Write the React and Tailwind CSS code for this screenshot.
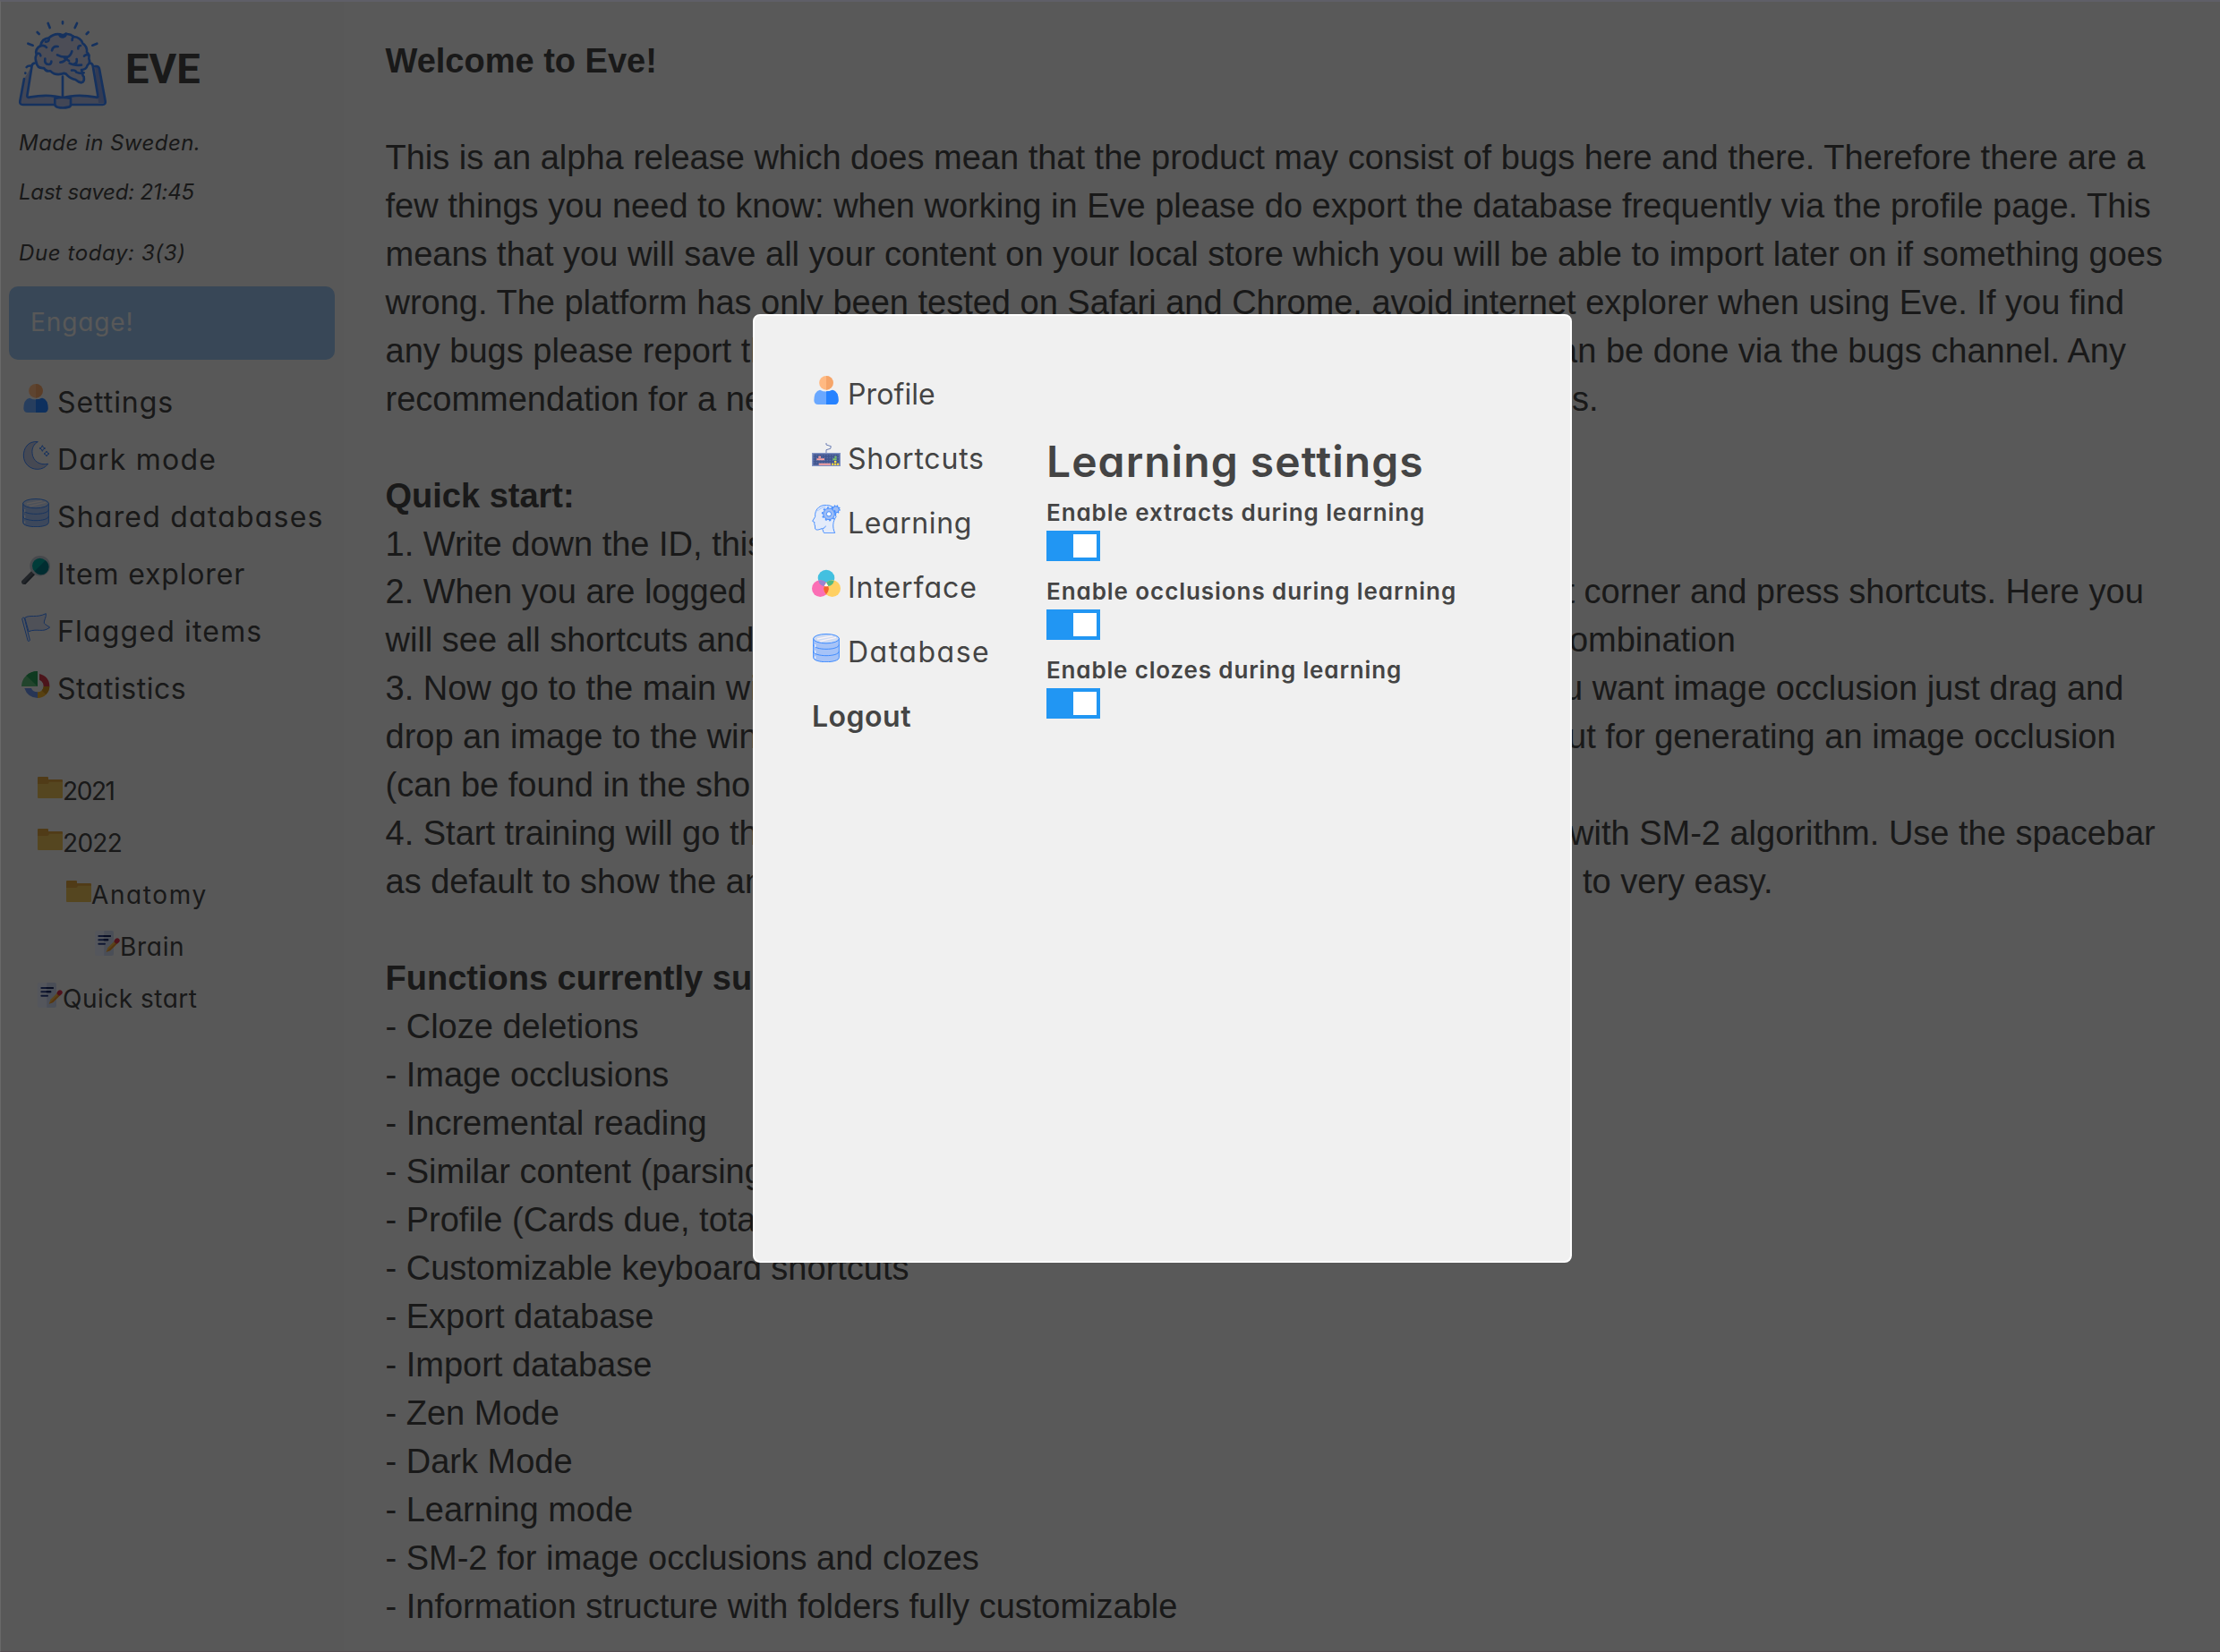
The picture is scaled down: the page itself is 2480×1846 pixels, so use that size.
import React from "react";

const inter = "font-['Inter',sans-serif] [font-feature-settings:'cv11']";

function Logo() {
  return (
    <svg viewBox="60 35 300 300" className="size-[100px] shrink-0" fill="none" stroke="#3a86ff" strokeWidth="8" strokeLinecap="round" strokeLinejoin="round">
      <path fill="#b4bfe6" stroke="none" d="M81 233 68 310q-1 10 8 10h268q10 0 8-11l-24-116-18-5 18 108q-70-8-118 4-50-12-120-4l18-108z" />
      <path fill="#f0f0f4" stroke="none" d="M112 180 92 296q70-8 118 4 50-12 118-4L304 180z" />
      <path fill="#8b9fe0" stroke="none" d="M318 192l16 2 20 120h-24z" />
      <path d="M81 233 67 308q-2 12 10 12h266q12 0 10-12l-20-108q-2-9-10-9h-5M104 190q-10-2-15 4" />
      <path d="M85 214v.5" />
      <path d="M116 181q-7 0-9 8L91 290q0 7 8 5 66-12 111 3 45-15 112-3 8 2 6-5L311 189q-2-8-9-8" />
      <path d="M210 226v70" />
      <path fill="#b4bfe6" d="M184 299v19q0 8 8 10 18 5 38 0 8-2 7-10v-19q-26-7-53 0Z" />
      <path fill="#cdd0ea" d="M167 207q-12 3-20-10-22 2-25-18-6-16 0-26-6-20 14-31 4-24 28-26 22-20 46-9 20-10 37 5 23 2 30 22 16 10 14 30 10 9 7 22 6 13-5 22-4 15-20 15l4 14q-1 6 4 9 3 17-8 20-10-1-20-10-18-4-26-13-8-12-20-6-24 5-38-10Z" />
      <path d="M164 98q1 12-11 11M199 84q1 9 12 9 10-2 10-11M247 92q-6 4-5 12M136 123q13-5 20 5M124 149q10-4 12 7M174 138q4-16 20-13M241 141q-4 15-15 19 M192 153q14 8 34 7-8 17-24 18M216 163l15 10M151 166q-3 18 12 19 9-1 9-10M257 167q3 14-9 17M233 181q14 8 40 6M298 154q-9-5-16 3M270 122q-9 0-8 10M240 205q13-2 16 6 12 6 25 2" />
      <path d="M210 42v6M161 47l6 15M258 47l-7 15M125 77l6 6M296 77l-6 6M94 115l16 6M325 115l-15 6" />
    </svg>
  );
}

const box = "size-8 shrink-0";

function Person() {
  return (
    <svg viewBox="0 0 96 96" className={box}>
      <circle cx="48" cy="23.500" r="23.500" fill="#ffb982" />
      <path d="M48 0a23.500 23.500 0 0 1 0 47z" fill="#f5a56a" />
      <path d="M27 47Q7 52 7 82q0 14 14 14h54q14 0 14-14 0-30-20-35-21 11-42 0Z" fill="#6aa8ff" />
      <path d="M48 52q11 0 21-5 20 5 20 35 0 14-14 14H48Z" fill="#2682ff" />
    </svg>
  );
}

function Moon() {
  return (
    <svg viewBox="0 0 96 96" className={box} stroke="#3f87ff" strokeWidth="3" strokeLinejoin="round">
      <path d="M55 2C20-2 7 26 7 48c0 28 22 46 46 46 15 0 29-7 36-18C60 82 38 66 36 40 34 22 43 8 55 2Z" fill="#bec6e0" />
      <path d="m70 14 3 7 7 3-7 3-3 7-3-7-7-3 7-3ZM84 33l3 6 6 3-6 3-3 6-3-6-6-3 6-3Z" fill="none" />
    </svg>
  );
}

function Database() {
  return (
    <svg viewBox="0 0 96 96" className={box} stroke="#3f8cff" strokeWidth="3">
      <path d="M5 16v64c0 20 86 20 86 0V16Z" fill="#a6c3f7" />
      <path d="M5 37c0 20 86 20 86 0M5 59c0 20 86 20 86 0" fill="none" />
      <path d="M11 36v10M11 56v10M11 76v8" stroke="#e8f0ff" strokeWidth="4" />
      <ellipse cx="48" cy="17" rx="43" ry="15.500" fill="#cfdcf3" />
      <path d="m18 18 52-10M26 26l55-13" stroke="#fbf3f5" strokeWidth="4" />
    </svg>
  );
}

function Magnifier() {
  return (
    <svg viewBox="0 0 96 96" className={box}>
      <path d="M8 88 40 56" stroke="#5c6670" strokeWidth="16" strokeLinecap="round" />
      <path d="M12 93 43 61" stroke="#434d57" strokeWidth="6" strokeLinecap="round" />
      <circle cx="62" cy="34" r="30" fill="#00a29b" stroke="#bcc3cd" strokeWidth="8" />
      <path d="M80 16a26 26 0 1 1-36 36Z" fill="#007a86" />
    </svg>
  );
}

function Flag() {
  return (
    <svg viewBox="0 0 96 96" className={box} stroke="#3f87ff" strokeWidth="3" strokeLinejoin="round">
      <path d="M11 16C30 4 48 18 82 2c2 12-8 24-6 32 4 6 14 10 19 14-24 20-40 2-71 14Z" fill="#d5dcee" />
      <path d="M2 20c0-5 7-6 8-2l18 72c0 5-6 6-7 2Z" fill="#e0e6f5" />
    </svg>
  );
}

function Pie() {
  return (
    <svg viewBox="0 0 96 96" className={box}>
      <path d="M54 54H0A54 51 0 0 1 54 3Z" fill="#5cb877" />
      <path d="M54 54 16 18Q32 3 54 3Z" fill="#2a9d58" />
      <path d="M60 12a41 41 0 0 1 34 42H74q0-16-14-22Z" fill="#cf3a4a" />
      <path d="M94 54a40 40 0 0 1-40 39V73q17 0 20-19Z" fill="#eeb02c" />
      <path d="M94 54a40 40 0 0 1-12 27L68 68q6-6 6-14Z" fill="#cc9022" />
      <path d="M10 60h23q5 13 21 13v20Q20 91 10 60Z" fill="#6a90e6" />
    </svg>
  );
}

function Keyboard() {
  return (
    <svg viewBox="0 0 96 96" className={box}>
      <path d="M48 9v6l16 5-2 8-14 4v11" fill="none" stroke="#6d7fb5" strokeWidth="3" />
      <rect y="42" width="96" height="45" fill="#8294c4" />
      <rect x="4" y="46" width="88" height="37" fill="#41568f" />
      <path d="M5 51h86M5 59h86M5 67h86M5 75h86" stroke="#6f83b8" strokeWidth="3" strokeDasharray="3 6" />
      <path d="M16 64h26M22 56h8M23 80h40" stroke="#fba3a3" strokeWidth="6" />
      <path d="M70 64h13M76 56h7" stroke="#7cc36a" strokeWidth="6" />
      <path d="M66 80h25M75 72h8" stroke="#ffdf3c" strokeWidth="6" strokeDasharray="7 2" />
    </svg>
  );
}

function Head() {
  return (
    <svg viewBox="0 0 96 96" className={box} stroke="#4a90ff" strokeWidth="3" strokeLinejoin="round">
      <path d="M60 3C30-5 8 14 11 40L2 55l7 4-1 6 2 4 1 12c4 6 14 2 22-1 6 4 3 10 8 15h36c-10-22-6-40 4-55L72 8Z" fill="#e3ebfa" />
      <path d="M34 80c8-1 10-4 12-9" fill="none" />
      <path d="M18 22c6-8 18-14 28-15" fill="none" stroke="#9fc3ff" />
      <circle cx="80" cy="16" r="11" fill="#9dbdf5" strokeWidth="3" />
      <circle cx="80" cy="16" r="13" fill="none" strokeWidth="5" strokeDasharray="4 5" />
      <circle cx="57" cy="31" r="19" fill="#9dbdf5" />
      <circle cx="57" cy="31" r="22" fill="none" strokeWidth="5" strokeDasharray="6 7.800" />
      <circle cx="57" cy="31" r="8" fill="#f4f8ff" />
    </svg>
  );
}

function Rings() {
  return (
    <svg viewBox="0 0 96 96" className={box}>
      <circle cx="48" cy="30" r="28" fill="#43c0e0" />
      <circle cx="28" cy="65" r="28" fill="#fb6eb4" />
      <circle cx="68" cy="65" r="28" fill="#ffd062" />
      <path d="M22 40q12-6 23 3l3 7-6 7Q26 56 22 40Z" fill="#9a84d0" />
      <path d="M74 40q-12-6-23 3l-3 7 6 7Q70 56 74 40Z" fill="#4fb985" />
      <path d="M48 45q17 20 0 40-17-20 0-40Z" fill="#f4652c" />
      <path d="m48 45 7 11q-7 3-14 0Z" fill="#fff" />
    </svg>
  );
}

function Folder() {
  return (
    <svg viewBox="0 0 84 84" className="size-7 shrink-0">
      <path d="M0 9q0-3 3-3h30q3 0 3 3v6h45q3 0 3 3v50H0Z" fill="#d9a040" />
      <path d="M0 30h34l6-7h44v52q0 3-3 3H3q-3 0-3-3Z" fill="#e6bd58" />
    </svg>
  );
}

function Note() {
  return (
    <svg viewBox="0 0 84 84" className="size-7 shrink-0" strokeLinecap="round">
      <rect width="63" height="84" rx="7" fill="#e3e9f8" />
      <path d="M31 0h25q7 0 7 7v70q0 7-7 7H31Z" fill="#c9d3ec" />
      <path d="M13 18h38M13 31h30M13 44h20" stroke="#2b3f86" strokeWidth="6" />
      <path d="M31 18h20M31 31h12" stroke="#16245e" strokeWidth="6" />
      <path d="M38 71 43 57 68 32 77 41 52 66Z" fill="#f5b94a" />
      <path d="M38 71 52 66 77 41 73 37Z" fill="#e8912c" />
      <path d="m73 35 2-2" stroke="#d8304a" strokeWidth="16" />
    </svg>
  );
}

const menu = [
  [Person, "Settings", "tracking-[0.95px]"],
  [Moon, "Dark mode", "tracking-[1.2px]"],
  [Database, "Shared databases", "tracking-[1.2px]"],
  [Magnifier, "Item explorer", "tracking-[0.85px]"],
  [Flag, "Flagged items", "tracking-[1.17px]"],
  [Pie, "Statistics", "tracking-[0.55px]"],
];

const tree = [
  [Folder, "2021", "pl-[42px] tracking-[-1.4px]"],
  [Folder, "2022", "pl-[42px] tracking-[-0.7px]"],
  [Folder, "Anatomy", "pl-[74px] tracking-[1.6px]"],
  [Note, "Brain", "pl-[106px] tracking-[0.7px]"],
  [Note, "Quick start", "pl-[42px] tracking-[0.5px]"],
];

const nav = [
  [Person, "Profile", "tracking-[0.1px]"],
  [Keyboard, "Shortcuts", "tracking-[0.8px]"],
  [Head, "Learning", "tracking-[0.6px]"],
  [Rings, "Interface", "tracking-[0.95px]"],
  [Database, "Database", "tracking-[1.5px]"],
];

const toggles = [
  ["Enable extracts during learning", "tracking-[0.91px]"],
  ["Enable occlusions during learning", "tracking-[0.93px]"],
  ["Enable clozes during learning", "tracking-[0.84px]"],
];

const lines = [
  { b: "Welcome to Eve!" },
  {},
  { t: "This is an alpha release which does mean that the product may consist of bugs here and there. Therefore there are a" },
  { t: "few things you need to know: when working in Eve please do export the database frequently via the profile page. This" },
  { t: "means that you will save all your content on your local store which you will be able to import later on if something goes" },
  { t: "wrong. The platform has only been tested on Safari and Chrome, avoid internet explorer when using Eve. If you find" },
  { t: "any bugs please report th", w: "w-[1310.6px]", r: "an be done via the bugs channel. Any" },
  { t: "recommendation for a ne", w: "w-[1325.5px]", r: "s." },
  {},
  { b: "Quick start:" },
  { t: "1. Write down the ID, this" },
  { t: "2. When you are logged", w: "w-[1318px]", r: "t corner and press shortcuts. Here you" },
  { t: "will see all shortcuts and", w: "w-[1322.4px]", r: "ombination" },
  { t: "3. Now go to the main wi", w: "w-[1316.6px]", r: "u want image occlusion just drag and" },
  { t: "drop an image to the win", w: "w-[1320.5px]", r: "ut for generating an image occlusion" },
  { t: "(can be found in the sho" },
  { t: "4. Start training will go th", w: "w-[1322.5px]", r: "with SM-2 algorithm. Use the spacebar" },
  { t: "as default to show the an", w: "w-[1337.5px]", r: "to very easy." },
  {},
  { b: "Functions currently su" },
  { t: "- Cloze deletions" },
  { t: "- Image occlusions" },
  { t: "- Incremental reading" },
  { t: "- Similar content (parsing" },
  { t: "- Profile (Cards due, tota" },
  { t: "- Customizable keyboard shortcuts" },
  { t: "- Export database" },
  { t: "- Import database" },
  { t: "- Zen Mode" },
  { t: "- Dark Mode" },
  { t: "- Learning mode" },
  { t: "- SM-2 for image occlusions and clozes" },
  { t: "- Information structure with folders fully customizable" },
];

export default function App() {
  return (
    <div className="relative h-[1846px] w-[2480px] overflow-hidden bg-[#f0f0f0] text-[#444]">
      <div className="flex h-full">
        <aside className={`flex w-[384px] shrink-0 flex-col bg-[#eeeeee] ${inter}`}>
          <div className="flex h-[122px] pt-[22px] pl-5">
            <Logo />
            <h1 className="pl-[20px] font-['Roboto',sans-serif] text-[47px] leading-[110px] font-bold">EVE</h1>
          </div>
          <div className="pl-[21px] text-[24px] leading-9 whitespace-nowrap italic">
            <p className="mt-5 tracking-[0.45px]">Made in Sweden.</p>
            <p className="mt-[19px] tracking-[-0.2px]">Last saved: 21:45</p>
            <p className="mt-8 tracking-[0.6px]">Due today: 3(3)</p>
          </div>
          <button className="mt-[19px] ml-[10px] h-[82px] w-[364px] rounded-[10px] bg-[#97c0eb] pb-[2px] pl-6 text-left text-[28px] tracking-[0.9px] text-[#efefef]">
            Engage!
          </button>
          <nav className="mt-4 text-[32px] leading-[64px]">
            {menu.map(([Icon, label, track]) => (
              <div key={label} className="flex h-16 items-baseline gap-2 pl-6">
                <Icon />
                <span className={track}>{label}</span>
              </div>
            ))}
          </nav>
          <div className="mt-[53px] text-[28px] leading-[58px]">
            {tree.map(([Icon, label, track]) => (
              <div key={label} className={`flex h-[58px] items-baseline ${track}`}>
                <Icon />
                <span>{label}</span>
              </div>
            ))}
          </div>
        </aside>
        <main className="pt-[42px] pl-[46.5px] font-['Liberation_Sans',Arial,sans-serif] text-[38px] leading-[53.96px] whitespace-nowrap">
          {lines.map((l, i) => (
            <div key={i} className="flex h-[53.96px]">
              {l.b && <b>{l.b}</b>}
              {l.t && <span className={l.w}>{l.t}</span>}
              {l.r && <span>{l.r}</span>}
            </div>
          ))}
        </main>
      </div>

      <div className="absolute inset-0 border-t-2 border-b border-l border-t-[#5f5f68] border-b-[#544b50] border-l-[#686868] bg-black/63" />

      <section className={`absolute top-[351px] left-[841px] flex h-[1060px] w-[915px] rounded-[8px] border-2 border-white bg-[#f0f0f0] ${inter}`}>
        <nav className="w-[326px] shrink-0 pt-[52px] pl-16 text-[32px] leading-[72px]">
          {nav.map(([Icon, label, track]) => (
            <div key={label} className="flex h-[72px] items-baseline gap-2">
              <Icon />
              <span className={track}>{label}</span>
            </div>
          ))}
          <div className="font-semibold tracking-[0.5px]">Logout</div>
        </nav>
        <div className="pt-[127px]">
          <h2 className="h-[73px] text-[48px] leading-[71px] font-semibold tracking-[1.05px]">Learning settings</h2>
          {toggles.map(([label, track]) => (
            <div key={label} className="mb-[14px]">
              <div className={`h-10 text-[26px] leading-10 font-semibold ${track}`}>{label}</div>
              <div className="flex h-[34px] w-[60px] justify-end bg-[#2196f3] p-1">
                <div className="size-[26px] bg-white" />
              </div>
            </div>
          ))}
        </div>
      </section>
    </div>
  );
}
